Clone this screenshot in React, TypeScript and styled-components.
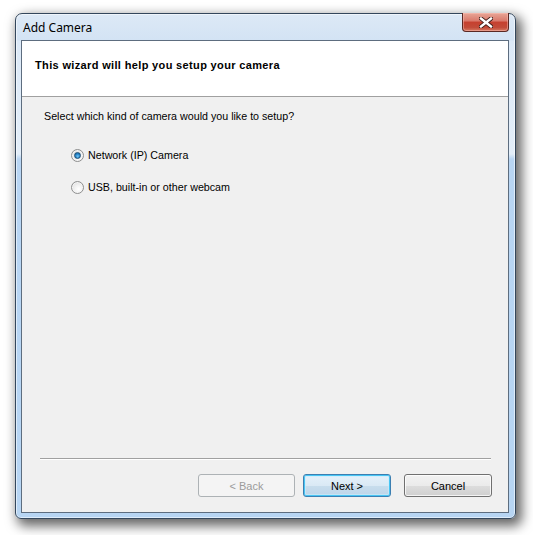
import styled, { createGlobalStyle, css } from "styled-components";

const GlobalStyle = createGlobalStyle`
  html, body {
    margin: 0;
    padding: 0;
    background: #ffffff;
  }
  body {
    width: 533px;
    height: 535px;
    overflow: hidden;
    font-family: "Liberation Sans", Arial, sans-serif;
  }
`;

export const Page = styled.div`
  padding: 13px 0 0 15px;
`;

export const Window = styled.div`
  box-sizing: border-box;
  width: 501px;
  height: 506px;
  border: 1px solid #34475c;
  border-radius: 7px 7px 6px 6px;
  background: linear-gradient(
    to bottom,
    #dde9f6 0px,
    #d3e3f4 26px,
    #dce9f7 27px,
    #e3eef9 140px,
    #b8d5f3 145px,
    #b7d5f3 100%
  );
  box-shadow: 4px 5px 12px 2px rgba(0, 0, 0, 0.6),
    inset 0 0 0 1px rgba(255, 255, 255, 0.55);
  display: flex;
  flex-direction: column;
`;

export const TitleBar = styled.div`
  height: 26px;
  display: flex;
  justify-content: space-between;
  padding-left: 7px;
  padding-right: 6px;
`;

export const Title = styled.div`
  align-self: center;
  font-family: "Noto Sans", "Open Sans", sans-serif;
  font-size: 12px;
  color: #000;
  margin-top: 1px;
`;

export const CloseButton = styled.div`
  box-sizing: border-box;
  width: 47px;
  height: 19px;
  margin-top: -1px;
  border: 1px solid #5a2823;
  border-top: none;
  border-radius: 0 0 4px 4px;
  background: linear-gradient(
    to bottom,
    #e8a697 0%,
    #d9786a 45%,
    #c6402f 50%,
    #c24b39 80%,
    #d77a62 100%
  );
  box-shadow: inset 0 0 0 1px rgba(255, 200, 190, 0.45);
  display: flex;
  align-items: center;
  justify-content: center;
`;

export const Client = styled.div`
  flex: 1;
  margin: 0 6px 5px 5px;
  border: 1px solid #5d6d7f;
  background: #f0f0f0;
  display: flex;
  flex-direction: column;
`;

export const Header = styled.div`
  height: 56px;
  box-sizing: border-box;
  background: #ffffff;
  border-bottom: 1px solid #a0a0a0;
  padding: 17px 0 0 13px;
  font-size: 11px;
  line-height: 14px;
  font-weight: bold;
  letter-spacing: 0.35px;
  color: #000;
`;

export const Body = styled.div`
  flex: 1;
  padding: 12px 0 0 22px;
  display: flex;
  flex-direction: column;
`;

export const Prompt = styled.div`
  font-size: 10.7px;
  line-height: 14px;
  color: #000;
`;

export const RadioGroup = styled.div`
  margin-top: 24px;
  padding-left: 27px;
  display: flex;
  flex-direction: column;
  gap: 16px;
`;

export const RadioRow = styled.label`
  display: flex;
  align-items: center;
  gap: 4px;
  height: 16px;
  font-size: 10.7px;
  color: #000;
`;

export const Radio = styled.span<{ $checked?: boolean }>`
  position: relative;
  box-sizing: border-box;
  width: 13px;
  height: 13px;
  border-radius: 50%;
  border: 1px solid #8e8f8f;
  background: radial-gradient(
    circle at 60% 65%,
    #ffffff 0%,
    #f2f2f2 40%,
    #d6d6d6 100%
  );
  box-shadow: inset 0 0 0 1px #f4f4f4;
  ${(p) =>
    p.$checked &&
    css`
      &::after {
        content: "";
        position: absolute;
        left: 2px;
        top: 2px;
        width: 7px;
        height: 7px;
        box-sizing: border-box;
        border-radius: 50%;
        border: 1px solid #1c4d73;
        background: radial-gradient(
          circle at 55% 65%,
          #7cc8f0 0%,
          #2a8ad0 45%,
          #115b92 100%
        );
      }
    `}
`;

export const Footer = styled.div`
  padding: 0 16px 15px 0;
  display: flex;
  flex-direction: column;
`;

export const Separator = styled.div`
  margin: 0 1px 0 18px;
  height: 1px;
  background: #a0a0a0;
  border-bottom: 1px solid #ffffff;
`;

export const ButtonRow = styled.div`
  margin-top: 14px;
  display: flex;
  justify-content: flex-end;
`;

type Variant = "normal" | "default" | "disabled";

export const Button = styled.div<{ $variant: Variant; $width: number; $gap?: number }>`
  box-sizing: border-box;
  width: ${(p) => p.$width}px;
  height: 23px;
  margin-left: ${(p) => p.$gap ?? 0}px;
  border-radius: 3px;
  display: flex;
  align-items: center;
  justify-content: center;
  font-size: 11px;
  color: #000;
  ${(p) =>
    p.$variant === "normal" &&
    css`
      border: 1px solid #707070;
      background: linear-gradient(
        to bottom,
        #f2f2f2 0%,
        #ebebeb 50%,
        #dddddd 51%,
        #cfcfcf 100%
      );
      box-shadow: inset 0 0 0 1px rgba(255, 255, 255, 0.75);
    `}
  ${(p) =>
    p.$variant === "default" &&
    css`
      border: 1px solid #3c7fb1;
      background: linear-gradient(
        to bottom,
        #e5f1fa 0%,
        #dae9f5 50%,
        #c8dded 51%,
        #bdd5e9 100%
      );
      box-shadow: inset 0 0 0 1px #48c5f4, inset 0 0 0 2px rgba(200, 236, 252, 0.6);
    `}
  ${(p) =>
    p.$variant === "disabled" &&
    css`
      border: 1px solid #adb2b5;
      background: #f4f4f4;
      color: #9b9b9b;
    `}
`;

const CloseGlyph = () => (
  <svg width="14" height="11" viewBox="0 0 14 11">
    <path
      d="M2 1.5 L12 9.5 M12 1.5 L2 9.5"
      stroke="#3a1a16"
      strokeWidth="4.2"
      strokeLinecap="square"
      fill="none"
    />
    <path
      d="M2 1.5 L12 9.5 M12 1.5 L2 9.5"
      stroke="#ffffff"
      strokeWidth="2.4"
      strokeLinecap="square"
      fill="none"
    />
  </svg>
);

export default function App() {
  return (
    <>
      <GlobalStyle />
      <Page>
        <Window>
          <TitleBar>
            <Title>Add Camera</Title>
            <CloseButton>
              <CloseGlyph />
            </CloseButton>
          </TitleBar>
          <Client>
            <Header>This wizard will help you setup your camera</Header>
            <Body>
              <Prompt>Select which kind of camera would you like to setup?</Prompt>
              <RadioGroup>
                <RadioRow>
                  <Radio $checked />
                  Network (IP) Camera
                </RadioRow>
                <RadioRow>
                  <Radio />
                  USB, built-in or other webcam
                </RadioRow>
              </RadioGroup>
            </Body>
            <Footer>
              <Separator />
              <ButtonRow>
                <Button $variant="disabled" $width={97}>
                  &lt; Back
                </Button>
                <Button $variant="default" $width={88} $gap={8}>
                  Next &gt;
                </Button>
                <Button $variant="normal" $width={88} $gap={13}>
                  Cancel
                </Button>
              </ButtonRow>
            </Footer>
          </Client>
        </Window>
      </Page>
    </>
  );
}
